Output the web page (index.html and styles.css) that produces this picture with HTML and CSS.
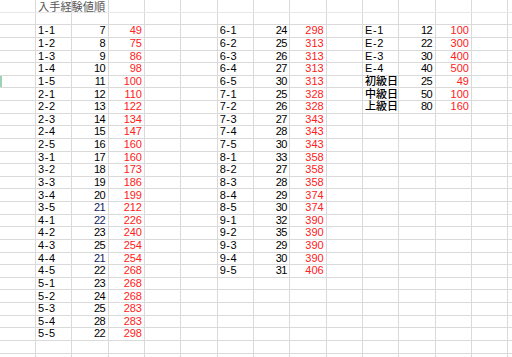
FILE: index.html
```html
<!DOCTYPE html>
<html lang="ja">
<head>
<meta charset="utf-8">
<title>入手経験値順</title>
<link rel="stylesheet" href="styles.css">
</head>
<body>
<div class="sheet">
  <div class="cols">
    <div></div><div></div><div></div><div></div><div></div><div></div><div></div><div></div><div></div><div></div><div></div><div></div><div></div><div></div><div></div>
  </div>
  <div class="rows">
    <div class="row"><span class="b title">入手経験値順</span></div>
    <div class="row"></div>
    <div class="row"><span class="b">1-1</span><span class="c">7</span><span class="d">49</span><span class="g">6-1</span><span class="h">24</span><span class="i">298</span><span class="k">E-1</span><span class="l">12</span><span class="m">100</span></div>
    <div class="row"><span class="b">1-2</span><span class="c">8</span><span class="d">75</span><span class="g">6-2</span><span class="h">25</span><span class="i">313</span><span class="k">E-2</span><span class="l">22</span><span class="m">300</span></div>
    <div class="row"><span class="b">1-3</span><span class="c">9</span><span class="d">86</span><span class="g">6-3</span><span class="h">26</span><span class="i">313</span><span class="k">E-3</span><span class="l">30</span><span class="m">400</span></div>
    <div class="row"><span class="b">1-4</span><span class="c">10</span><span class="d">98</span><span class="g">6-4</span><span class="h">27</span><span class="i">313</span><span class="k">E-4</span><span class="l">40</span><span class="m">500</span></div>
    <div class="row sel"><span class="b">1-5</span><span class="c">11</span><span class="d">100</span><span class="g">6-5</span><span class="h">30</span><span class="i">313</span><span class="k jp">初級日</span><span class="l">25</span><span class="m">49</span></div>
    <div class="row"><span class="b">2-1</span><span class="c">12</span><span class="d">110</span><span class="g">7-1</span><span class="h">25</span><span class="i">328</span><span class="k jp">中級日</span><span class="l">50</span><span class="m">100</span></div>
    <div class="row"><span class="b">2-2</span><span class="c">13</span><span class="d">122</span><span class="g">7-2</span><span class="h">26</span><span class="i">328</span><span class="k jp">上級日</span><span class="l">80</span><span class="m">160</span></div>
    <div class="row"><span class="b">2-3</span><span class="c">14</span><span class="d">134</span><span class="g">7-3</span><span class="h">27</span><span class="i">343</span></div>
    <div class="row"><span class="b">2-4</span><span class="c">15</span><span class="d">147</span><span class="g">7-4</span><span class="h">28</span><span class="i">343</span></div>
    <div class="row"><span class="b">2-5</span><span class="c">16</span><span class="d">160</span><span class="g">7-5</span><span class="h">30</span><span class="i">343</span></div>
    <div class="row"><span class="b">3-1</span><span class="c">17</span><span class="d">160</span><span class="g">8-1</span><span class="h">33</span><span class="i">358</span></div>
    <div class="row"><span class="b">3-2</span><span class="c">18</span><span class="d">173</span><span class="g">8-2</span><span class="h">27</span><span class="i">358</span></div>
    <div class="row"><span class="b">3-3</span><span class="c">19</span><span class="d">186</span><span class="g">8-3</span><span class="h">28</span><span class="i">358</span></div>
    <div class="row"><span class="b">3-4</span><span class="c">20</span><span class="d">199</span><span class="g">8-4</span><span class="h">29</span><span class="i">374</span></div>
    <div class="row"><span class="b">3-5</span><span class="c navy">21</span><span class="d">212</span><span class="g">8-5</span><span class="h">30</span><span class="i">374</span></div>
    <div class="row"><span class="b">4-1</span><span class="c navy">22</span><span class="d">226</span><span class="g">9-1</span><span class="h">32</span><span class="i">390</span></div>
    <div class="row"><span class="b">4-2</span><span class="c">23</span><span class="d">240</span><span class="g">9-2</span><span class="h">35</span><span class="i">390</span></div>
    <div class="row"><span class="b">4-3</span><span class="c">25</span><span class="d">254</span><span class="g">9-3</span><span class="h">29</span><span class="i">390</span></div>
    <div class="row"><span class="b">4-4</span><span class="c navy">21</span><span class="d">254</span><span class="g">9-4</span><span class="h">30</span><span class="i">390</span></div>
    <div class="row"><span class="b">4-5</span><span class="c">22</span><span class="d">268</span><span class="g">9-5</span><span class="h">31</span><span class="i">406</span></div>
    <div class="row"><span class="b">5-1</span><span class="c">23</span><span class="d">268</span></div>
    <div class="row"><span class="b">5-2</span><span class="c">24</span><span class="d">268</span></div>
    <div class="row"><span class="b">5-3</span><span class="c">25</span><span class="d">283</span></div>
    <div class="row"><span class="b">5-4</span><span class="c">28</span><span class="d">283</span></div>
    <div class="row"><span class="b">5-5</span><span class="c">22</span><span class="d">298</span></div>
    <div class="row"></div>
    <div class="row"></div>
  </div>
</div>
</body>
</html>
```

FILE: styles.css
```css
html, body {
  margin: 0;
  padding: 0;
  background: #ffffff;
}
body {
  width: 512px;
  height: 357px;
  overflow: hidden;
  font-family: "Liberation Sans", "Noto Sans CJK JP", sans-serif;
  font-size: 11px;
  color: #000;
}
.sheet {
  display: grid;
  width: 512px;
  height: 357px;
  overflow: hidden;
}
.cols, .rows {
  grid-area: 1 / 1;
}
.cols {
  display: grid;
  grid-template-columns: 36px repeat(13, 36.33px) 1fr;
  height: 357px;
}
.cols > div {
  border-right: 1px solid #dadada;
}
.cols > div:last-child {
  border-right: none;
}
.rows {
  display: flex;
  flex-direction: column;
}
.row {
  display: grid;
  grid-template-columns: 36px repeat(13, 36.33px) 1fr;
  height: 12.63px;
  flex: none;
  box-sizing: border-box;
  border-bottom: 1px solid #dadada;
  align-items: end;
}
.row:first-child {
  border-bottom-color: #e8e8e8;
}
.row.sel {
  box-shadow: inset 2px 0 0 #9ed2b4;
}
.row span {
  line-height: 11px;
  white-space: nowrap;
  padding-bottom: 0.5px;
}
.b, .g, .k { padding-left: 2px; letter-spacing: 0.6px; }
.c, .d, .h, .i, .l, .m { text-align: right; padding-right: 3px; }
.c, .h, .l { letter-spacing: -0.6px; padding-right: 3.6px; }
.b { grid-column: 2; }
.c { grid-column: 3; }
.d { grid-column: 4; color: #ff2020; }
.g { grid-column: 7; }
.h { grid-column: 8; }
.i { grid-column: 9; color: #ff2020; }
.k { grid-column: 11; }
.l { grid-column: 12; }
.m { grid-column: 13; color: #ff2020; }
.row span.title {
  grid-column: 2 / span 3;
  color: #555;
  font-size: 11.2px;
  letter-spacing: 0;
  padding-bottom: 0;
  margin-bottom: -1.5px;
}
.navy { color: #10205a; }
.row span.jp { font-weight: 500; letter-spacing: 0; }
```
